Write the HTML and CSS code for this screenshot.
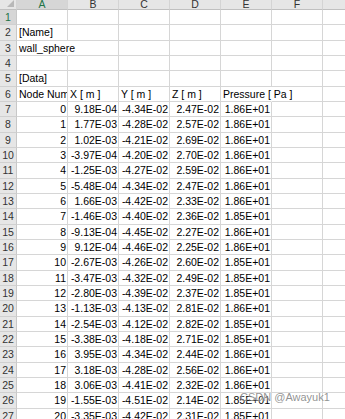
FILE: index.html
```html
<!DOCTYPE html>
<html lang="en">
<head>
  <meta charset="UTF-8">
  <title>wall_sphere.csv</title>
  <link rel="stylesheet" href="styles.css">
</head>
<body>
  <div class="sheet-wrap">
    <table class="sheet">
      <colgroup>
        <col class="col-row">
        <col class="col-cell"><col class="col-cell"><col class="col-cell">
        <col class="col-cell"><col class="col-cell"><col class="col-cell">
        <col class="col-last">
      </colgroup>
      <tr class="col-heads">
        <th class="corner"><span class="corner-mark"></span></th>
        <th class="sel">A</th><th>B</th><th>C</th><th>D</th><th>E</th><th>F</th><th>G</th>
      </tr>
      <tr><th class="sel">1</th><td></td><td></td><td></td><td></td><td></td><td></td><td></td></tr>
      <tr><th>2</th><td>[Name]</td><td></td><td></td><td></td><td></td><td></td><td></td></tr>
      <tr><th>3</th><td class="spill">wall_sphere</td><td></td><td></td><td></td><td></td><td></td><td></td></tr>
      <tr><th>4</th><td></td><td></td><td></td><td></td><td></td><td></td><td></td></tr>
      <tr><th>5</th><td>[Data]</td><td></td><td></td><td></td><td></td><td></td><td></td></tr>
      <tr><th>6</th><td>Node Number</td><td>X [ m ]</td><td>Y [ m ]</td><td>Z [ m ]</td><td class="spill">Pressure [ Pa ]</td><td></td><td></td></tr>
      <tr><th>7</th><td class="num">0</td><td class="num">9.18E-04</td><td class="num">-4.34E-02</td><td class="num">2.47E-02</td><td class="num">1.86E+01</td><td></td><td></td></tr>
      <tr><th>8</th><td class="num">1</td><td class="num">1.77E-03</td><td class="num">-4.28E-02</td><td class="num">2.57E-02</td><td class="num">1.86E+01</td><td></td><td></td></tr>
      <tr><th>9</th><td class="num">2</td><td class="num">1.02E-03</td><td class="num">-4.21E-02</td><td class="num">2.69E-02</td><td class="num">1.86E+01</td><td></td><td></td></tr>
      <tr><th>10</th><td class="num">3</td><td class="num">-3.97E-04</td><td class="num">-4.20E-02</td><td class="num">2.70E-02</td><td class="num">1.86E+01</td><td></td><td></td></tr>
      <tr><th>11</th><td class="num">4</td><td class="num">-1.25E-03</td><td class="num">-4.27E-02</td><td class="num">2.59E-02</td><td class="num">1.86E+01</td><td></td><td></td></tr>
      <tr><th>12</th><td class="num">5</td><td class="num">-5.48E-04</td><td class="num">-4.34E-02</td><td class="num">2.47E-02</td><td class="num">1.86E+01</td><td></td><td></td></tr>
      <tr><th>13</th><td class="num">6</td><td class="num">1.66E-03</td><td class="num">-4.42E-02</td><td class="num">2.33E-02</td><td class="num">1.86E+01</td><td></td><td></td></tr>
      <tr><th>14</th><td class="num">7</td><td class="num">-1.46E-03</td><td class="num">-4.40E-02</td><td class="num">2.36E-02</td><td class="num">1.85E+01</td><td></td><td></td></tr>
      <tr><th>15</th><td class="num">8</td><td class="num">-9.13E-04</td><td class="num">-4.45E-02</td><td class="num">2.27E-02</td><td class="num">1.86E+01</td><td></td><td></td></tr>
      <tr><th>16</th><td class="num">9</td><td class="num">9.12E-04</td><td class="num">-4.46E-02</td><td class="num">2.25E-02</td><td class="num">1.86E+01</td><td></td><td></td></tr>
      <tr><th>17</th><td class="num">10</td><td class="num">-2.67E-03</td><td class="num">-4.26E-02</td><td class="num">2.60E-02</td><td class="num">1.85E+01</td><td></td><td></td></tr>
      <tr><th>18</th><td class="num">11</td><td class="num">-3.47E-03</td><td class="num">-4.32E-02</td><td class="num">2.49E-02</td><td class="num">1.85E+01</td><td></td><td></td></tr>
      <tr><th>19</th><td class="num">12</td><td class="num">-2.80E-03</td><td class="num">-4.39E-02</td><td class="num">2.37E-02</td><td class="num">1.85E+01</td><td></td><td></td></tr>
      <tr><th>20</th><td class="num">13</td><td class="num">-1.13E-03</td><td class="num">-4.13E-02</td><td class="num">2.81E-02</td><td class="num">1.86E+01</td><td></td><td></td></tr>
      <tr><th>21</th><td class="num">14</td><td class="num">-2.54E-03</td><td class="num">-4.12E-02</td><td class="num">2.82E-02</td><td class="num">1.85E+01</td><td></td><td></td></tr>
      <tr><th>22</th><td class="num">15</td><td class="num">-3.38E-03</td><td class="num">-4.18E-02</td><td class="num">2.71E-02</td><td class="num">1.85E+01</td><td></td><td></td></tr>
      <tr><th>23</th><td class="num">16</td><td class="num">3.95E-03</td><td class="num">-4.34E-02</td><td class="num">2.44E-02</td><td class="num">1.86E+01</td><td></td><td></td></tr>
      <tr><th>24</th><td class="num">17</td><td class="num">3.18E-03</td><td class="num">-4.28E-02</td><td class="num">2.56E-02</td><td class="num">1.86E+01</td><td></td><td></td></tr>
      <tr><th>25</th><td class="num">18</td><td class="num">3.06E-03</td><td class="num">-4.41E-02</td><td class="num">2.32E-02</td><td class="num">1.86E+01</td><td></td><td></td></tr>
      <tr><th>26</th><td class="num">19</td><td class="num">-1.55E-03</td><td class="num">-4.51E-02</td><td class="num">2.14E-02</td><td class="num">1.85E+01</td><td></td><td></td></tr>
      <tr><th>27</th><td class="num">20</td><td class="num">-3.35E-03</td><td class="num">-4.42E-02</td><td class="num">2.31E-02</td><td class="num">1.85E+01</td><td></td><td></td></tr>
    </table>
    <div class="watermark">CSDN @Awayuk1</div>
  </div>
</body>
</html>
```

FILE: styles.css
```css
/* Reset */
body {
    margin: 0;
    padding: 0;
    background-color: #ffffff;
    overflow: hidden;
}

.sheet-wrap {
    position: relative;
    width: 345px;
    height: 419px;
    overflow: hidden;
}

/* Spreadsheet grid */
.sheet {
    border-collapse: separate;
    border-spacing: 0;
    table-layout: fixed;
    width: 383px;
    font-family: "Liberation Sans", Arial, sans-serif;
    font-size: 10.5px;
    color: #000000;
}

.col-row { width: 17px; }
.col-cell { width: 51px; }
.col-last { width: 60px; }

.sheet tr {
    height: 15.33px;
}

.sheet td,
.sheet th {
    padding: 0 2px;
    height: 15.33px;
    line-height: 14px;
    white-space: nowrap;
    overflow: hidden;
    border-right: 1px solid #d6d6d6;
    border-bottom: 1px solid #d6d6d6;
    box-sizing: border-box;
    text-align: left;
    vertical-align: middle;
}

/* cells whose text runs into the empty neighbour */
.sheet td.spill {
    overflow: visible;
    border-right-color: #ffffff;
    position: relative;
}

.sheet td.num {
    text-align: right;
    padding-right: 1px;
}

/* Row and column headings */
.sheet th {
    background-color: #e6e6e6;
    color: #333333;
    font-weight: normal;
    text-align: center;
    padding: 0;
    border-right-color: #c8c8c8;
    border-bottom-color: #d0d0d0;
}

.sheet .col-heads {
    height: 10px;
}

.sheet .col-heads th {
    height: 10px;
    line-height: 8px;
    vertical-align: top;
    border-bottom-color: #c0c0c0;
    border-right-color: #d4d4d4;
}

.sheet th.sel {
    background-color: #d6d6d6;
    color: #217346;
}

.sheet .corner {
    position: relative;
}

.corner-mark {
    position: absolute;
    right: 2px;
    bottom: 2px;
    width: 0;
    height: 0;
    border-left: 7px solid transparent;
    border-bottom: 7px solid #b8b8b8;
}

/* Site watermark */
.watermark {
    position: absolute;
    left: 240px;
    top: 391px;
    font-family: "Liberation Sans", Arial, sans-serif;
    font-size: 11px;
    color: rgba(110, 110, 110, 0.75);
    text-shadow: 0 0 2px #ffffff;
    white-space: nowrap;
}
```
